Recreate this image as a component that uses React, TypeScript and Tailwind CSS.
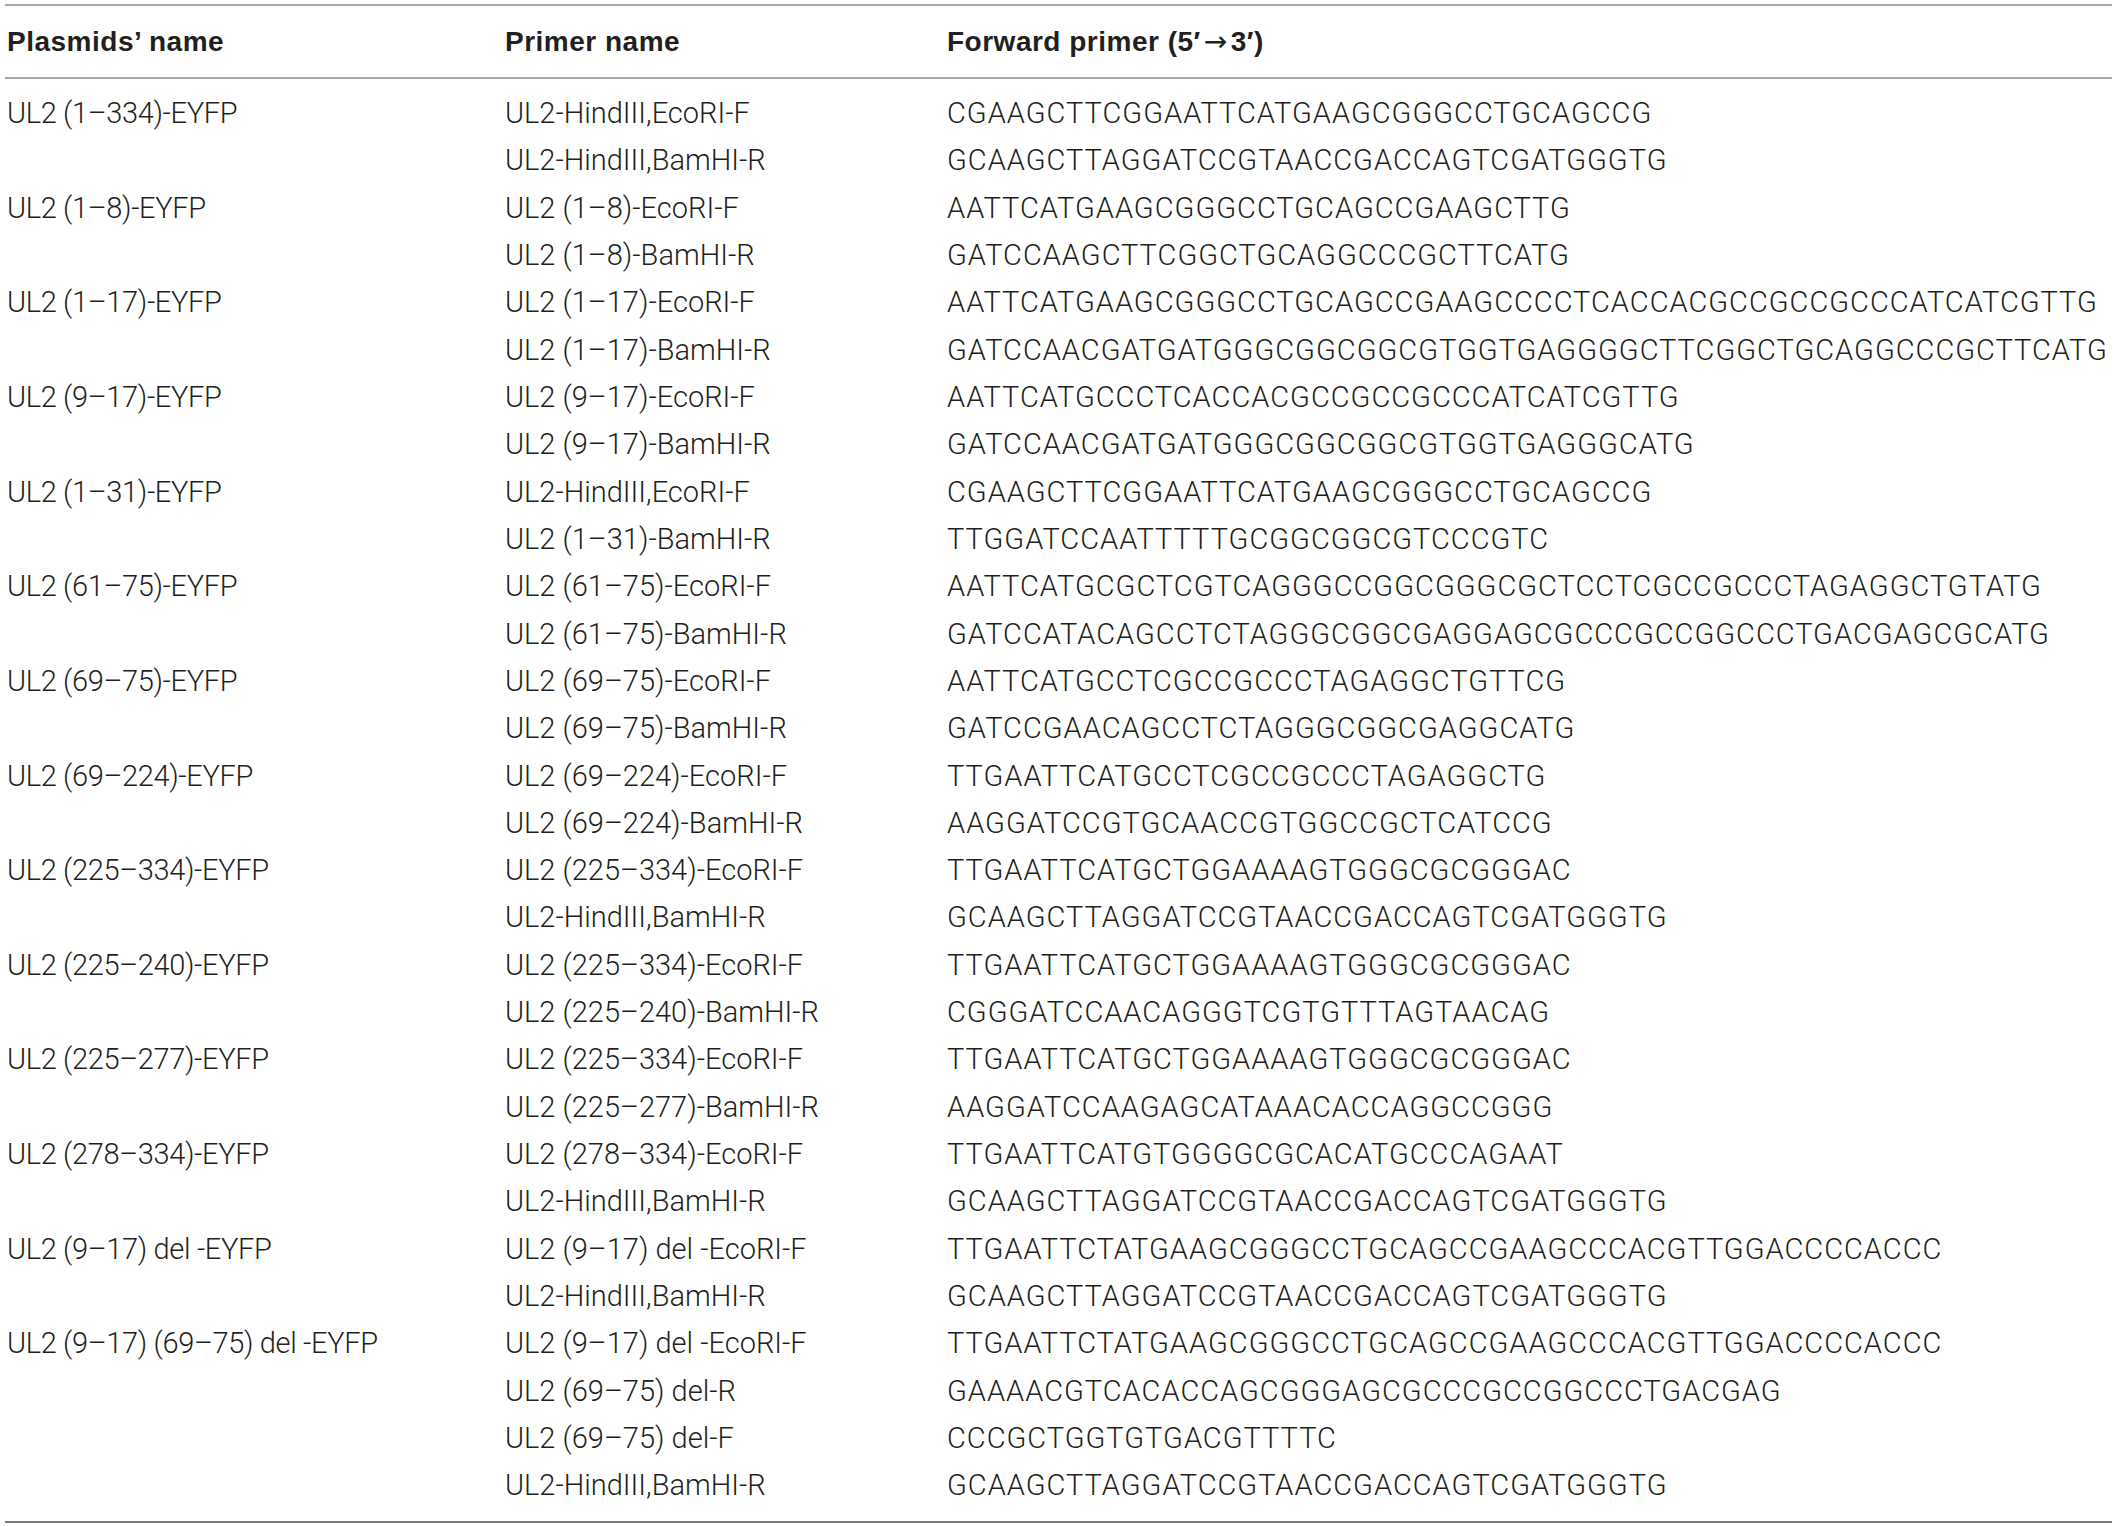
type Row = { plasmid?: string; primer: string; seq: string };

const rows: Row[] = [
  { plasmid: 'UL2 (1–334)-EYFP', primer: 'UL2-HindIII,EcoRI-F', seq: 'CGAAGCTTCGGAATTCATGAAGCGGGCCTGCAGCCG' },
  { primer: 'UL2-HindIII,BamHI-R', seq: 'GCAAGCTTAGGATCCGTAACCGACCAGTCGATGGGTG' },
  { plasmid: 'UL2 (1–8)-EYFP', primer: 'UL2 (1–8)-EcoRI-F', seq: 'AATTCATGAAGCGGGCCTGCAGCCGAAGCTTG' },
  { primer: 'UL2 (1–8)-BamHI-R', seq: 'GATCCAAGCTTCGGCTGCAGGCCCGCTTCATG' },
  { plasmid: 'UL2 (1–17)-EYFP', primer: 'UL2 (1–17)-EcoRI-F', seq: 'AATTCATGAAGCGGGCCTGCAGCCGAAGCCCCTCACCACGCCGCCGCCCATCATCGTTG' },
  { primer: 'UL2 (1–17)-BamHI-R', seq: 'GATCCAACGATGATGGGCGGCGGCGTGGTGAGGGGCTTCGGCTGCAGGCCCGCTTCATG' },
  { plasmid: 'UL2 (9–17)-EYFP', primer: 'UL2 (9–17)-EcoRI-F', seq: 'AATTCATGCCCTCACCACGCCGCCGCCCATCATCGTTG' },
  { primer: 'UL2 (9–17)-BamHI-R', seq: 'GATCCAACGATGATGGGCGGCGGCGTGGTGAGGGCATG' },
  { plasmid: 'UL2 (1–31)-EYFP', primer: 'UL2-HindIII,EcoRI-F', seq: 'CGAAGCTTCGGAATTCATGAAGCGGGCCTGCAGCCG' },
  { primer: 'UL2 (1–31)-BamHI-R', seq: 'TTGGATCCAATTTTTGCGGCGGCGTCCCGTC' },
  { plasmid: 'UL2 (61–75)-EYFP', primer: 'UL2 (61–75)-EcoRI-F', seq: 'AATTCATGCGCTCGTCAGGGCCGGCGGGCGCTCCTCGCCGCCCTAGAGGCTGTATG' },
  { primer: 'UL2 (61–75)-BamHI-R', seq: 'GATCCATACAGCCTCTAGGGCGGCGAGGAGCGCCCGCCGGCCCTGACGAGCGCATG' },
  { plasmid: 'UL2 (69–75)-EYFP', primer: 'UL2 (69–75)-EcoRI-F', seq: 'AATTCATGCCTCGCCGCCCTAGAGGCTGTTCG' },
  { primer: 'UL2 (69–75)-BamHI-R', seq: 'GATCCGAACAGCCTCTAGGGCGGCGAGGCATG' },
  { plasmid: 'UL2 (69–224)-EYFP', primer: 'UL2 (69–224)-EcoRI-F', seq: 'TTGAATTCATGCCTCGCCGCCCTAGAGGCTG' },
  { primer: 'UL2 (69–224)-BamHI-R', seq: 'AAGGATCCGTGCAACCGTGGCCGCTCATCCG' },
  { plasmid: 'UL2 (225–334)-EYFP', primer: 'UL2 (225–334)-EcoRI-F', seq: 'TTGAATTCATGCTGGAAAAGTGGGCGCGGGAC' },
  { primer: 'UL2-HindIII,BamHI-R', seq: 'GCAAGCTTAGGATCCGTAACCGACCAGTCGATGGGTG' },
  { plasmid: 'UL2 (225–240)-EYFP', primer: 'UL2 (225–334)-EcoRI-F', seq: 'TTGAATTCATGCTGGAAAAGTGGGCGCGGGAC' },
  { primer: 'UL2 (225–240)-BamHI-R', seq: 'CGGGATCCAACAGGGTCGTGTTTAGTAACAG' },
  { plasmid: 'UL2 (225–277)-EYFP', primer: 'UL2 (225–334)-EcoRI-F', seq: 'TTGAATTCATGCTGGAAAAGTGGGCGCGGGAC' },
  { primer: 'UL2 (225–277)-BamHI-R', seq: 'AAGGATCCAAGAGCATAAACACCAGGCCGGG' },
  { plasmid: 'UL2 (278–334)-EYFP', primer: 'UL2 (278–334)-EcoRI-F', seq: 'TTGAATTCATGTGGGGCGCACATGCCCAGAAT' },
  { primer: 'UL2-HindIII,BamHI-R', seq: 'GCAAGCTTAGGATCCGTAACCGACCAGTCGATGGGTG' },
  { plasmid: 'UL2 (9–17) del -EYFP', primer: 'UL2 (9–17) del -EcoRI-F', seq: 'TTGAATTCTATGAAGCGGGCCTGCAGCCGAAGCCCACGTTGGACCCCACCC' },
  { primer: 'UL2-HindIII,BamHI-R', seq: 'GCAAGCTTAGGATCCGTAACCGACCAGTCGATGGGTG' },
  { plasmid: 'UL2 (9–17) (69–75) del -EYFP', primer: 'UL2 (9–17) del -EcoRI-F', seq: 'TTGAATTCTATGAAGCGGGCCTGCAGCCGAAGCCCACGTTGGACCCCACCC' },
  { primer: 'UL2 (69–75) del-R', seq: 'GAAAACGTCACACCAGCGGGAGCGCCCGCCGGCCCTGACGAG' },
  { primer: 'UL2 (69–75) del-F', seq: 'CCCGCTGGTGTGACGTTTTC' },
  { primer: 'UL2-HindIII,BamHI-R', seq: 'GCAAGCTTAGGATCCGTAACCGACCAGTCGATGGGTG' },
];

export default function App() {
  return (
    <div className="min-h-screen bg-white pt-[4px] font-['Liberation_Sans',Arial,sans-serif] text-[#231f20]">
      <div className="mx-[5px] border-y-2 border-[#a8a8a8]">
        {/* Header */}
        <div className="grid h-[71px] grid-cols-[500px_442px_1fr] items-center pt-[1px] text-[28px] font-bold tracking-[0.5px]">
          <div className="pl-[2px]">Plasmids’ name</div>
          <div>Primer name</div>
          <div>
            Forward primer (5′
            <span className="mx-[3px] font-['DejaVu_Sans',sans-serif] text-[28px] font-normal">→</span>
            3′)
          </div>
        </div>
      </div>

      {/* Body */}
      <div className="mx-[5px] border-b-2 border-[#777777] py-[11px]">
        {rows.map((r, i) => (
          <div
            key={i}
            className="grid h-[47.33px] grid-cols-[500px_442px_1fr] items-center whitespace-nowrap font-['Roboto',sans-serif] text-[29px] font-light"
          >
            <div className="pl-[2px] tracking-[-0.35px]">{r.plasmid ?? ''}</div>
            <div className="tracking-[0px]">{r.primer}</div>
            <div className="tracking-[1px]">{r.seq}</div>
          </div>
        ))}
      </div>
    </div>
  );
}
